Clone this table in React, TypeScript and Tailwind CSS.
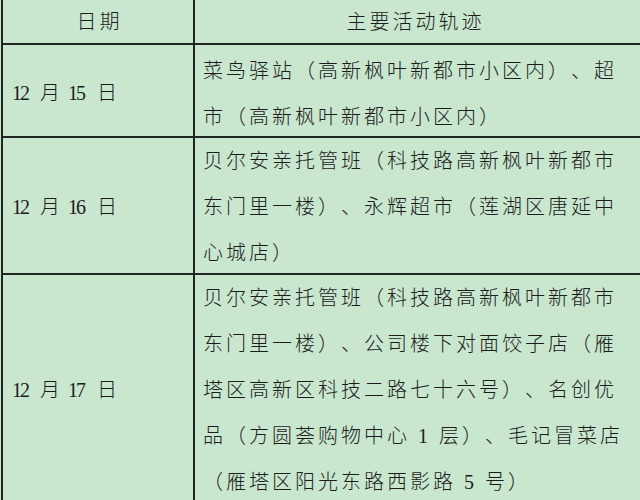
import React from "react";

const rows = [
  {
    day: "15",
    h: "h-[93px]",
    pt: "pt-[3px]",
    lines: ["菜鸟驿站（高新枫叶新都市小区内）、超", "市（高新枫叶新都市小区内）"],
  },
  {
    day: "16",
    h: "h-[137px]",
    pt: "pt-0",
    lines: [
      "贝尔安亲托管班（科技路高新枫叶新都市",
      "东门里一楼）、永辉超市（莲湖区唐延中",
      "心城店）",
    ],
  },
  {
    day: "17",
    h: "h-[227px]",
    pt: "pt-0",
    lines: [
      "贝尔安亲托管班（科技路高新枫叶新都市",
      "东门里一楼）、公司楼下对面饺子店（雁",
      "塔区高新区科技二路七十六号）、名创优",
      "品（方圆荟购物中心 1 层）、毛记冒菜店",
      "（雁塔区阳光东路西影路 5 号）",
    ],
  },
];

const font = "font-['Liberation_Serif','Noto_Sans_CJK_SC',serif]";

export default function App() {
  return (
    <div
      className={`w-[640px] h-[500px] overflow-hidden bg-[#c9e7cf] text-[#1c1c1c] ${font} [text-spacing-trim:space-all]`}
    >
      <div className="ml-[1px] border-l-2 border-[#1e2721]">
        {/* header */}
        <div className="grid grid-cols-[192px_1fr] h-[45px] border-b-2 border-[#1e2721] text-[20px] tracking-[3px] font-light">
          <div className="flex items-center justify-center border-r-2 border-[#1e2721] pl-[3px]">日期</div>
          <div className="flex items-center justify-center pr-[4px]">主要活动轨迹</div>
        </div>

        {rows.map((r, i) => (
          <div
            key={r.day}
            className={`grid grid-cols-[192px_1fr] ${r.h} ${i < rows.length - 1 ? "border-b-2" : ""} border-[#1e2721]`}
          >
            <div className="flex items-center border-r-2 border-[#1e2721] pl-[9px] text-[20px] font-light">
              <span className="text-[20px] tracking-[-2px]">12</span>
              <span className="ml-[12px]">月</span>
              <span className="ml-[8px] text-[20px] tracking-[-2px]">{r.day}</span>
              <span className="ml-[13px]">日</span>
            </div>
            <div className={`${r.pt} pl-[8px] text-[20px] leading-[46px] tracking-[3px] font-light whitespace-nowrap`}>
              {r.lines.map((l) => (
                <div key={l}>{l}</div>
              ))}
            </div>
          </div>
        ))}
      </div>
    </div>
  );
}
